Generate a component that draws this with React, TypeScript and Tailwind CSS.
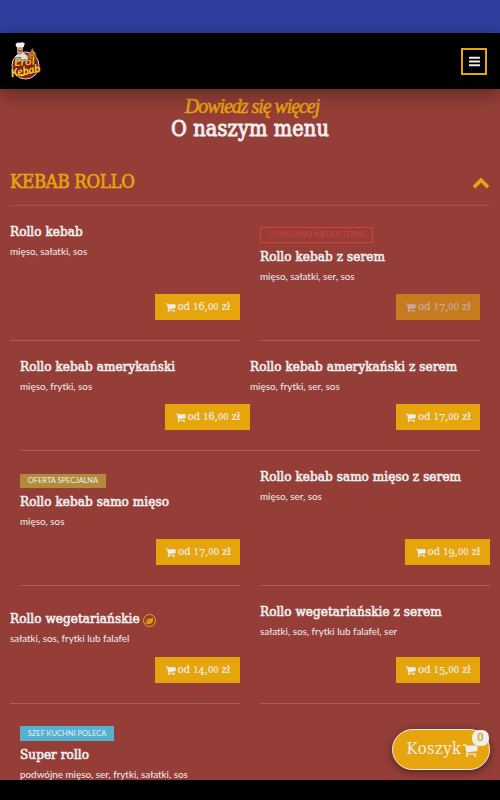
import React from 'react';
import { FaLeaf } from 'react-icons/fa';
import clsx from 'clsx';

type BadgeKind = 'unavailable' | 'special' | 'chef';

interface MenuItem {
  name: string;
  ingredients: string;
  price?: string;
  badge?: BadgeKind;
  vegetarian?: boolean;
  disabled?: boolean;
  className: string;
}

interface MenuRow {
  className: string;
  items: MenuItem[];
}

const badges: Record<BadgeKind, { label: string; className: string }> = {
  unavailable: {
    label: 'CHWILOWO NIEDOSTĘPNE',
    className: 'mt-[21px] h-4 w-[113px] border border-[#e23b34] text-[#dc3932]',
  },
  special: {
    label: 'OFERTA SPECJALNA',
    className: 'mt-[23px] h-[14px] w-[86px] bg-[#b28a3c] text-[#eee]',
  },
  chef: {
    label: 'SZEF KUCHNI POLECA',
    className: 'mt-[22px] h-[15px] w-[94px] bg-[#54b1d2] text-[#eee]',
  },
};

const rows: MenuRow[] = [
  {
    className: 'h-[135px] gap-5 pl-[10px]',
    items: [
      { name: 'Rollo kebab', ingredients: 'mięso, sałatki, sos', price: '16,00', className: 'w-[230px]' },
      {
        name: 'Rollo kebab z serem',
        ingredients: 'mięso, sałatki, ser, sos',
        price: '17,00',
        badge: 'unavailable',
        disabled: true,
        className: 'w-[220px]',
      },
    ],
  },
  {
    className: 'h-[110px] pl-5',
    items: [
      { name: 'Rollo kebab amerykański', ingredients: 'mięso, frytki, sos', price: '16,00', className: 'w-[230px]' },
      { name: 'Rollo kebab amerykański z serem', ingredients: 'mięso, frytki, ser, sos', price: '17,00', className: 'w-[230px]' },
    ],
  },
  {
    className: 'h-[135px] gap-5 pl-5',
    items: [
      { name: 'Rollo kebab samo mięso', ingredients: 'mięso, sos', price: '17,00', badge: 'special', className: 'w-[220px]' },
      { name: 'Rollo kebab samo mięso z serem', ingredients: 'mięso, ser, sos', price: '19,00', className: 'w-[230px]' },
    ],
  },
  {
    className: 'h-[118px] gap-5 pl-[10px]',
    items: [
      {
        name: 'Rollo wegetariańskie',
        ingredients: 'sałatki, sos, frytki lub falafel',
        price: '14,00',
        vegetarian: true,
        className: 'w-[230px]',
      },
      { name: 'Rollo wegetariańskie z serem', ingredients: 'sałatki, sos, frytki lub falafel, ser', price: '15,00', className: 'w-[220px]' },
    ],
  },
  {
    className: 'h-[135px] pl-5',
    items: [
      { name: 'Super rollo', ingredients: 'podwójne mięso, ser, frytki, sałatki, sos', badge: 'chef', className: 'w-[220px]' },
    ],
  },
];

const serif = "font-['DejaVu_Serif_Condensed','DejaVu_Serif',serif] [font-stretch:condensed]";

function CartIcon({ className }: { className?: string }) {
  return (
    <svg viewBox="0 0 1792 1792" fill="currentColor" className={className}>
      <path d="M704 1536q0 52-38 90t-90 38-90-38-38-90 38-90 90-38 90 38 38 90zm896 0q0 52-38 90t-90 38-90-38-38-90 38-90 90-38 90 38 38 90zm128-1088v512q0 24-16.500 42.500t-40.500 21.500l-1044 122q13 60 13 70 0 16-24 64h920q26 0 45 19t19 45-19 45-45 19h-1024q-26 0-45-19t-19-45q0-11 8-31.500t16-36 21.500-40 15.500-29.500l-177-823h-204q-26 0-45-19t-19-45 19-45 45-19h256q16 0 28.500 6.500t19.500 15.500 13 24.500 8 26 5.500 29.500 4.500 26h1201q26 0 45 19t19 45z" />
    </svg>
  );
}

// Old-style numerals: 0-2 sit at x-height, 3-5, 7 and 9 drop below the baseline
function OldStyleNumber({ value }: { value: string }) {
  return (
    <>
      {value.split('').map((char, index) => (
        <span
          key={index}
          className={clsx(
            '012'.includes(char) && 'text-[0.84em]',
            '34579'.includes(char) && 'relative top-[2px]'
          )}
        >
          {char}
        </span>
      ))}
    </>
  );
}

function MenuCell({ item }: { item: MenuItem }) {
  const badge = item.badge && badges[item.badge];
  const narrow = item.price === '17,00' || item.price === '15,00';

  return (
    <article className={clsx('flex flex-col items-start border-b border-[#a85d56]', item.className)}>
      {badge && (
        <span
          className={clsx(
            'flex shrink-0 items-center justify-center whitespace-nowrap text-[7.5px] leading-none',
            badge.className
          )}
        >
          {badge.label}
        </span>
      )}
      <h3
        className={clsx(
          'flex h-5 items-center whitespace-nowrap text-[13.4px] tracking-[0.06px] text-[#eee] [-webkit-text-stroke:0.6px_#eee]',
          serif,
          badge ? 'mt-[4px]' : item.vegetarian ? 'mt-[23px]' : 'mt-[16px]'
        )}
      >
        {item.name}
        {item.vegetarian && (
          <span className="mt-[3px] ml-[3px] flex size-[13px] items-center justify-center rounded-full border border-[#e6a60d] text-[#e6a60d]">
            <FaLeaf className="size-[8px]" />
          </span>
        )}
      </h3>
      <p className="-mt-px flex h-5 items-center whitespace-nowrap text-[9.87px] text-[#eee]">{item.ingredients}</p>
      {item.price && (
        <button
          className={clsx(
            'mt-auto mb-5 flex h-[26px] shrink-0 items-center justify-center gap-[2px] self-end whitespace-nowrap bg-[#e7a50d] text-[11px] text-[#eee]',
            serif,
            narrow ? 'w-[84px]' : 'w-[85px]',
            item.disabled && 'opacity-60'
          )}
        >
          <CartIcon className="mt-px size-[11px]" />
          <span className="[-webkit-text-stroke:0.15px_#eee]">
            od <OldStyleNumber value={item.price} /> zł
          </span>
        </button>
      )}
    </article>
  );
}

export default function App() {
  return (
    <div className="relative flex h-[800px] w-[500px] flex-col overflow-hidden bg-[#953e38] font-['Lato',sans-serif]">
      <div className="h-[33px] shrink-0 bg-[#303f9f]" />
      <header className="relative z-10 flex h-[56px] shrink-0 items-center justify-between bg-black pr-[13px] pl-[10px] shadow-[0_4px_20px_rgba(0,0,0,0.4)]">
        <Logo />
        <button className="flex h-[27px] w-[26px] items-center justify-center border-2 border-[#e7a50d] text-[#eee]">
          <svg viewBox="0 0 1792 1792" fill="currentColor" className="size-[13px]">
            <path d="M1664 1344v128q0 26-19 45t-45 19H192q-26 0-45-19t-19-45v-128q0-26 19-45t45-19h1408q26 0 45 19t19 45zm0-512v128q0 26-19 45t-45 19H192q-26 0-45-19t-19-45V832q0-26 19-45t45-19h1408q26 0 45 19t19 45zm0-512v128q0 26-19 45t-45 19H192q-26 0-45-19t-19-45V320q0-26 19-45t45-19h1408q26 0 45 19t19 45z" />
          </svg>
        </button>
      </header>

      <main className="min-h-0 flex-1 overflow-hidden">
        <div className="flex h-[73px] flex-col items-center pt-[5px]">
          <p className="h-6 pl-1 whitespace-nowrap font-['Liberation_Serif',serif] text-[20px] leading-6 tracking-[-1.05px] text-[#e7a50d] italic [-webkit-text-stroke:0.45px_#e7a50d]">
            Dowiedz się więcej
          </p>
          <h1
            className={clsx(
              '-mt-px h-6 whitespace-nowrap text-[21.5px] leading-6 tracking-[0.15px] text-[#eee] [-webkit-text-stroke:0.9px_#eee]',
              serif
            )}
          >
            O naszym menu
          </h1>
        </div>
        <div className="mx-[10px] flex h-[44px] items-start justify-between border-b border-[#a3544e] pt-[6px]">
          <h2
            className={clsx(
              'text-[18.5px] leading-7 tracking-[-0.35px] text-[#e7a50d] [-webkit-text-stroke:0.6px_#e7a50d]',
              serif
            )}
          >
            KEBAB ROLLO
          </h2>
          <svg viewBox="0 0 1792 1792" fill="currentColor" className="mt-[5px] size-[18px] text-[#e7a50d]">
            <path d="M1683 1331l-166 165q-19 19-45 19t-45-19l-531-531-531 531q-19 19-45 19t-45-19l-166-165q-19-19-19-45.500t19-45.500l742-741q19-19 45-19t45 19l742 741q19 19 19 45.500t-19 45.500z" />
          </svg>
        </div>
        {rows.map((row, index) => (
          <section key={index} className={clsx('flex', row.className)}>
            {row.items.map(item => (
              <MenuCell key={item.name} item={item} />
            ))}
          </section>
        ))}
      </main>
      <footer className="h-5 shrink-0 bg-black" />

      {/* Floating cart */}
      <button
        className={clsx(
          'absolute top-[729px] right-[10px] flex h-[41px] w-[98px] items-center justify-center gap-px rounded-full border border-[#eee] bg-[#e7a50d] pl-[3px] text-[16.5px] tracking-[0.4px] text-[#eee] shadow-[0_2px_9px_rgba(0,0,0,0.45)]',
          serif
        )}
      >
        Koszyk
        <CartIcon className="size-4" />
        <span className="absolute top-0 right-0 flex h-4 w-[17px] items-center justify-center rounded-[7px] bg-[#eee] text-[11px] text-[#d89b12] [-webkit-text-stroke:0.3px_#d89b12]">
          0
        </span>
      </button>
    </div>
  );
}

function Logo() {
  return (
    <svg viewBox="0 0 32 38" className="h-[38px] w-8">
      <circle cx="15.5" cy="23.500" r="13.500" fill="#8d1d1b" stroke="#ddd" strokeWidth="1" />
      {/* chef */}
      <path d="M5 15 9 11h5l4 3.500v5H5z" fill="#ddd" />
      <path d="M7 5h6v6l-3 2-3-2z" fill="#c99678" />
      <path d="M6.500 5.200 5.500 2.200Q7-.2 10 .8 13.500-.6 14.800 1.800L13.500 5.200z" fill="#f4f4f4" />
      <path d="m8 8.500 2 .8 2.500-.8" stroke="#333" strokeWidth=".8" fill="none" />
      {/* flame */}
      <path d="M17 15q1-4 3-4 1-4 3-5 0 3 2 4 2 2 1 6l-5 2z" fill="#b86427" />
      <path d="m20 12 1 2m2-5 1 3m-2 1 2 2" stroke="#efad69" strokeWidth=".8" />
      <g fontFamily="Lato, sans-serif" fontWeight="900" fontStyle="italic" stroke="#431210" strokeWidth=".7" paintOrder="stroke">
        <text x="4" y="23.500" fontSize="11" fill="#e0b62f" textLength="21" lengthAdjust="spacingAndGlyphs" transform="rotate(-5 14 22)">Erol</text>
        <text x="0.500" y="33" fontSize="11.500" fill="#f6cd2e" textLength="30" lengthAdjust="spacingAndGlyphs" transform="rotate(-10 14 29)">Kebab</text>
      </g>
      <path d="M8 33.500q12-4 23-4-11 1-19 5z" fill="#f1c125" />
    </svg>
  );
}
